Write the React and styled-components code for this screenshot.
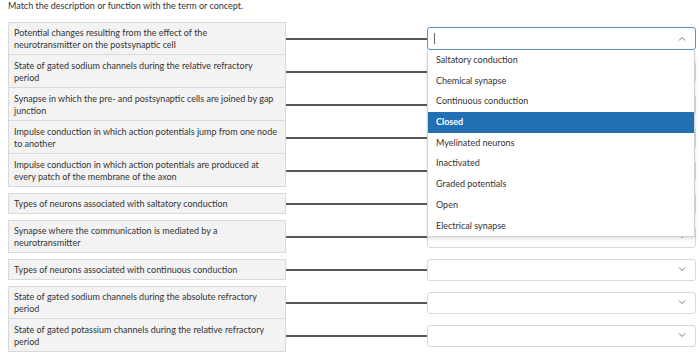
import React from "react";
import styled, { createGlobalStyle } from "styled-components";

const GlobalStyle = createGlobalStyle`
  html, body { margin: 0; padding: 0; background: #fff; }
  body { font-family: Lato, "Noto Sans", sans-serif; color: #333; }
`;

const Page = styled.div`
  width: 700px;
  box-sizing: border-box;
  padding: 0 4px 0 8px;
`;

const Title = styled.p`
  margin: 0 0 10px;
  font-size: 9px;
  line-height: 12px;
  color: #333;
`;

const List = styled.div`
  display: flex;
  flex-direction: column;
`;

const Row = styled.div`
  position: relative;
  display: grid;
  grid-template-columns: 278px 141px 1fr;
  align-items: center;
  height: 33px;
`;

const Card = styled.div`
  box-sizing: border-box;
  background: #f3f3f3;
  border: 1px solid #d9d9d9;
  border-top-width: ${(p) => (p.$joined ? 0 : 1)}px;
  padding: ${(p) => (p.$joined ? 5 : 4)}px 5px 3px;
  font-size: 9px;
  line-height: 12px;
  color: #333;
  white-space: nowrap;
`;

const Connector = styled.div`
  height: 2px;
  background: #585858;
`;

const Select = styled.div`
  box-sizing: border-box;
  height: ${(p) => (p.$open ? 23 : 22)}px;
  border: 1px solid ${(p) => (p.$open ? "#5b8ec8" : "#d9d9d9")};
  border-radius: 3px;
  background: #fff;
  display: flex;
  align-items: center;
  justify-content: space-between;
  padding: 0 9px 0 6px;
`;

const Caret = styled.span`
  display: block;
  width: 1px;
  height: 11px;
  background: #666;
`;

const Chevron = ({ up }) => (
  <svg width="8" height="5" viewBox="0 0 8 5">
    <polyline
      points={up ? "1,4.5 4,1.5 7,4.5" : "1,0.5 4,3.5 7,0.5"}
      fill="none"
      stroke="#777"
      strokeWidth="1"
    />
  </svg>
);

const Menu = styled.ul`
  position: absolute;
  z-index: 2;
  top: 28px;
  left: 419px;
  right: 1px;
  margin: 0;
  padding: 0;
  list-style: none;
  background: #fff;
  border: 1px solid #d0d0d0;
  border-top: none;
  box-shadow: 0 2px 3px rgba(0, 0, 0, 0.12);
`;

const Option = styled.li`
  height: 20.7px;
  line-height: 20.7px;
  padding: 0 8px;
  font-size: 9px;
  color: ${(p) => (p.$active ? "#fff" : "#333")};
  background: ${(p) => (p.$active ? "#236fb6" : "transparent")};
  font-weight: ${(p) => (p.$active ? 700 : 400)};
`;

const rows = [
  ["Potential changes resulting from the effect of the", "neurotransmitter on the postsynaptic cell"],
  ["State of gated sodium channels during the relative refractory", "period"],
  ["Synapse in which the pre- and postsynaptic cells are joined by gap", "junction"],
  ["Impulse conduction in which action potentials jump from one node", "to another"],
  ["Impulse conduction in which action potentials are produced at", "every patch of the membrane of the axon"],
  ["Types of neurons associated with saltatory conduction"],
  ["Synapse where the communication is mediated by a", "neurotransmitter"],
  ["Types of neurons associated with continuous conduction"],
  ["State of gated sodium channels during the absolute refractory", "period"],
  ["State of gated potassium channels during the relative refractory", "period"],
];

const options = [
  "Saltatory conduction",
  "Chemical synapse",
  "Continuous conduction",
  "Closed",
  "Myelinated neurons",
  "Inactivated",
  "Graded potentials",
  "Open",
  "Electrical synapse",
];

export default function App() {
  return (
    <Page>
      <GlobalStyle />
      <Title>Match the description or function with the term or concept.</Title>
      <List>
        {rows.map((lines, i) => {
          const prev = rows[i - 1];
          const joined = lines.length > 1 && prev && prev.length > 1 && i !== 6;
          const open = i === 0;
          return (
            <Row key={i}>
              <Card $joined={joined}>
                {lines.map((l, j) => (
                  <React.Fragment key={j}>
                    {j > 0 && <br />}
                    {l}
                  </React.Fragment>
                ))}
              </Card>
              <Connector />
              <Select $open={open}>
                {open ? <Caret /> : <span />}
                <Chevron up={open} />
              </Select>
              {open && (
                <Menu>
                  {options.map((o) => (
                    <Option key={o} $active={o === "Closed"}>
                      {o}
                    </Option>
                  ))}
                </Menu>
              )}
            </Row>
          );
        })}
      </List>
    </Page>
  );
}
